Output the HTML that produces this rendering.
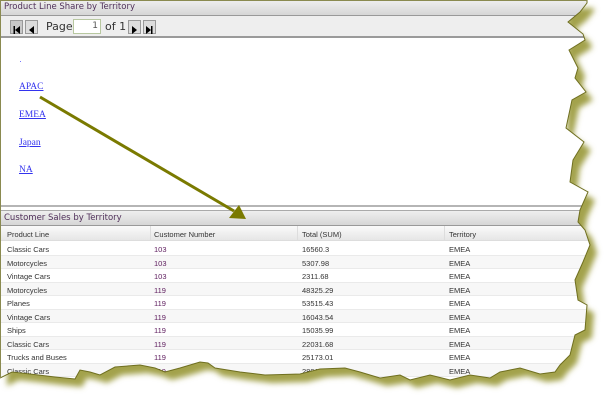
<!DOCTYPE html>
<html><head><meta charset="utf-8"><style>
*{margin:0;padding:0;box-sizing:border-box}
body{width:611px;height:408px;background:#fff;position:relative;overflow:hidden;font-family:"DejaVu Sans","Liberation Sans",sans-serif}
#shadow{position:absolute;left:0;top:0}
#wrap{position:absolute;left:0;top:0;width:611px;height:408px;background:#fff;
clip-path:polygon(0 0,587px 0,587px 3px,580px 12px,568px 22px,583px 34px,585px 40px,569px 50px,578px 68px,575px 78px,586px 92px,572px 100px,566px 128px,584px 142px,573px 160px,570px 182px,588px 192px,580px 210px,578px 222px,585px 230px,590px 245px,583px 262px,575px 280px,578px 300px,587px 305px,585px 330px,575px 335px,570px 355px,560px 365px,555px 372px,540px 374px,520px 368px,500px 372px,490px 378px,470px 375px,450px 380px,430px 375px,410px 380px,400px 375px,380px 378px,360px 372px,345px 368px,320px 369px,300px 374px,265px 375px,240px 372px,215px 368px,208px 363px,200px 362px,180px 368px,165px 372px,155px 368px,140px 365px,115px 367px,100px 375px,90px 372px,80px 370px,75px 379px,55px 377px,30px 374px,12px 372px,0 378px)}
.t{position:absolute;left:0;width:611px;font-size:8.5px;color:#50305a;padding-left:4px;border-bottom:1px solid #999;background:linear-gradient(#efefef,#d6d6d6)}
.tb{position:absolute;left:0;top:16px;width:611px;height:22px;background:#eeeeee;border-bottom:2px solid #9a9a9a}
.btn{position:absolute;top:4px;width:13px;height:14px;border:1px solid #999;background:#dcdcdc}
a{position:absolute;left:19px;font-family:"Liberation Serif",serif;font-size:9.5px;color:#3333ee;text-decoration:underline}
.hd{position:absolute;top:226px;left:0;width:611px;height:15px;background:linear-gradient(#fafafa,#e6e6e6);border-bottom:1px solid #ddd}
.c{position:absolute;font-family:"Liberation Sans",sans-serif;font-size:7.5px;color:#333;white-space:nowrap}
.r{position:absolute;left:0;width:611px;height:13.5px;border-bottom:1px solid #eaeaea}
</style></head><body>
<svg id="shadow" width="611" height="408"><defs><filter id="b"><feGaussianBlur stdDeviation="3"/></filter></defs>
<polygon filter="url(#b)" fill="#a3a24c" transform="translate(7,8)" points="587,0 587,3 580,12 568,22 583,34 585,40 569,50 578,68 575,78 586,92 572,100 566,128 584,142 573,160 570,182 588,192 580,210 578,222 585,230 590,245 583,262 575,280 578,300 587,305 585,330 575,335 570,355 560,365 555,372 540,374 520,368 500,372 490,378 470,375 450,380 430,375 410,380 400,375 380,378 360,372 345,368 320,369 300,374 265,375 240,372 215,368 208,363 200,362 180,368 165,372 155,368 140,365 115,367 100,375 90,372 80,370 75,379 55,377 30,374 12,372 0,378 0,300 560,300 560,0"/>
</svg>
<div id="wrap">
<div class="t" style="top:0;height:16px;line-height:15px">Product Line Share by Territory</div>
<div class="tb">
<div class="btn" style="left:10px;background:#c8c8c8"><svg width="11" height="12"><rect x="2.5" y="2" width="1.5" height="8" fill="#000"/><polygon points="9,2 9,10 4,6" fill="#000"/></svg></div>
<div class="btn" style="left:25px"><svg width="11" height="12"><polygon points="8,2 8,10 3,6" fill="#000"/></svg></div>
<span style="position:absolute;left:46px;top:4px;font-size:11px;color:#333">Page</span>
<div style="position:absolute;left:73px;top:3px;width:28px;height:15px;border:1px solid #b8c8a0;background:#fff;font-size:9px;text-align:right;padding-right:2px;line-height:13px;color:#555">1</div>
<span style="position:absolute;left:105px;top:4px;font-size:11px;color:#333">of 1</span>
<div class="btn" style="left:128px"><svg width="11" height="12"><polygon points="3,2 3,10 8,6" fill="#000"/></svg></div>
<div class="btn" style="left:143px"><svg width="11" height="12"><polygon points="2,2 2,10 7,6" fill="#000"/><rect x="7" y="2" width="1.5" height="8" fill="#000"/></svg></div>
</div>
<span style="position:absolute;left:20px;top:61px;width:1px;height:1px;background:#77f"></span>
<a style="top:82px">APAC</a>
<a style="top:110px">EMEA</a>
<a style="top:138px">Japan</a>
<a style="top:165px">NA</a>
<div style="position:absolute;top:205px;left:0;width:611px;height:2px;background:#b5b5b5"></div>
<div class="t" style="top:210px;height:16px;line-height:15px;border-top:1px solid #aaa">Customer Sales by Territory</div>
<div class="hd"></div>
<div class="c" style="left:7px;top:230px">Product Line</div>
<div class="c" style="left:154px;top:230px">Customer Number</div>
<div class="c" style="left:302px;top:230px">Total (SUM)</div>
<div class="c" style="left:449px;top:230px">Territory</div>
<div style="position:absolute;left:150px;top:226px;width:1px;height:15px;background:#ddd"></div>
<div style="position:absolute;left:297px;top:226px;width:1px;height:15px;background:#ddd"></div>
<div style="position:absolute;left:444px;top:226px;width:1px;height:15px;background:#ddd"></div>
<div id="rows"></div>
</div>
<svg style="position:absolute;left:0;top:0" width="611" height="408">
<polyline fill="none" stroke="#6f6f20" stroke-width="1" points="587,0 587,3 580,12 568,22 583,34 585,40 569,50 578,68 575,78 586,92 572,100 566,128 584,142 573,160 570,182 588,192 580,210 578,222 585,230 590,245 583,262 575,280 578,300 587,305 585,330 575,335 570,355 560,365 555,372 540,374 520,368 500,372 490,378 470,375 450,380 430,375 410,380 400,375 380,378 360,372 345,368 320,369 300,374 265,375 240,372 215,368 208,363 200,362 180,368 165,372 155,368 140,365 115,367 100,375 90,372 80,370 75,379 55,377 30,374 12,372 0,378"/>
<line x1="0.5" y1="0" x2="0.5" y2="378" stroke="#8a8a50" stroke-width="1"/>
<line x1="0" y1="0.5" x2="587" y2="0.5" stroke="#8a8a50" stroke-width="1"/>
<line x1="40" y1="97" x2="234" y2="211" stroke="#7a7a00" stroke-width="3"/>
<polygon points="246,219 229,218 239,205" fill="#7a7a00"/>
</svg>
<script>
var d=[["Classic Cars","103","16560.3"],["Motorcycles","103","5307.98"],["Vintage Cars","103","2311.68"],["Motorcycles","119","48325.29"],["Planes","119","53515.43"],["Vintage Cars","119","16043.54"],["Ships","119","15035.99"],["Classic Cars","119","22031.68"],["Trucks and Buses","119","25173.01"],["Classic Cars","119","28913.77"]];
var h="";d.forEach(function(r,i){var y=242+i*13.5;h+='<div class="r" style="top:'+y+'px;background:'+(i%2?'#f7f7f7':'#fff')+'"></div>';
var ty=y+3;h+='<div class="c" style="left:7px;top:'+ty+'px">'+r[0]+'</div><div class="c" style="left:154px;top:'+ty+'px;color:#602060">'+r[1]+'</div><div class="c" style="left:302px;top:'+ty+'px">'+r[2]+'</div><div class="c" style="left:449px;top:'+ty+'px">EMEA</div>';});
document.getElementById("rows").innerHTML=h;
</script>
</body></html>
